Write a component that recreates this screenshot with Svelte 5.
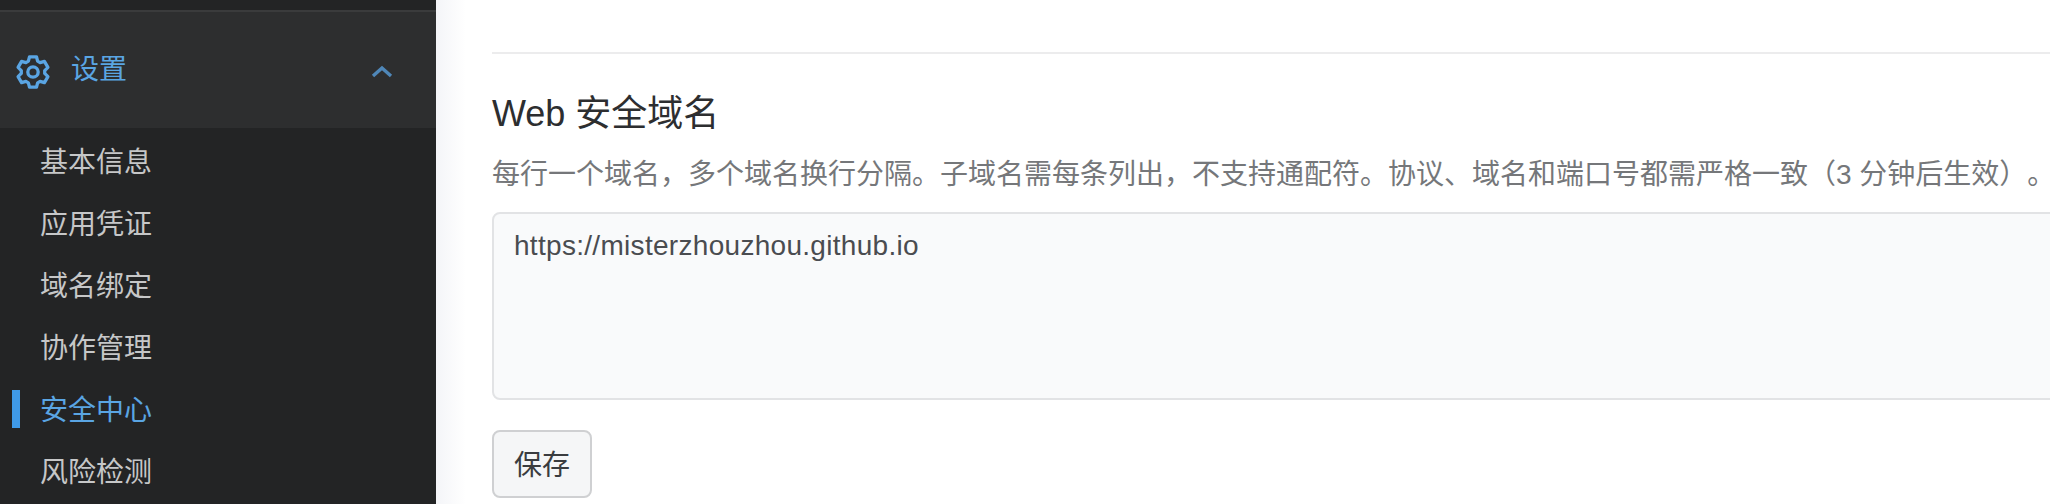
<script>
  const items = ['基本信息', '应用凭证', '域名绑定', '协作管理', '安全中心', '风险检测'];
  const active = '安全中心';

  function cogPath(outer, inner) {
    const pt = (deg, r) => {
      const a = (deg * Math.PI) / 180;
      return `${(20 + r * Math.cos(a)).toFixed(2)} ${(20 + r * Math.sin(a)).toFixed(2)}`;
    };
    const parts = [];
    for (let i = 0; i < 6; i++) {
      const a = -90 + i * 60;
      parts.push(pt(a - 13, outer), pt(a + 13, outer), pt(a + 23, inner), pt(a + 37, inner));
    }
    return 'M' + parts.join(' L') + ' Z';
  }
  const cog = cogPath(15.6, 11.8);
</script>

<div class="page">
  <aside class="side">
    <div class="top"></div>
    <div class="group">
      <svg class="gear" viewBox="0 0 40 40" fill="none" stroke="currentColor" stroke-width="3.3" stroke-linejoin="round">
        <circle cx="20" cy="20" r="5.2" />
        <path d={cog} />
      </svg>
      <span class="group-label">设置</span>
      <svg class="chev" viewBox="0 0 22 13" fill="none" stroke="currentColor" stroke-width="3.4" stroke-linejoin="miter">
        <path d="M2 11 L11 3 L20 11" />
      </svg>
    </div>
    <ul class="menu">
      {#each items as item}
        <li class:active={item === active}>{item}</li>
      {/each}
    </ul>
  </aside>
  <main class="main">
    <hr class="rule" />
    <h2 class="title">Web 安全域名</h2>
    <p class="desc">每行一个域名，多个域名换行分隔。子域名需每条列出，不支持通配符。协议、域名和端口号都需严格一致（3 分钟后生效）。</p>
    <div class="area">https://misterzhouzhou.github.io</div>
    <button class="save">保存</button>
  </main>
</div>

<style>
  :global(body) { margin: 0; background: #fff; }
  .page {
    display: flex;
    width: 2050px;
    height: 504px;
    overflow: hidden;
    font-family: "Liberation Sans", "Noto Sans CJK SC", sans-serif;
    text-spacing-trim: space-all;
  }
  .side {
    flex: 0 0 436px;
    background: #232425;
    display: flex;
    flex-direction: column;
  }
  .top { height: 10px; border-bottom: 2px solid #3a3b3c; }
  .group {
    height: 116px;
    flex: none;
    background: #2d2e2f;
    display: flex;
    align-items: center;
    color: #5aa5e3;
    padding-left: 13px;
    padding-right: 43px;
  }
  .gear { width: 40px; height: 40px; flex: none; margin-top: 4px; }
  .group-label { font-size: 28px; margin-left: 18px; flex: 1; line-height: 1; }
  .chev { width: 22px; height: 13px; color: #4f87b8; margin-top: 3px; }
  .menu { list-style: none; margin: 0; padding: 4px 0 0; }
  .menu li {
    position: relative;
    height: 62px;
    line-height: 62px;
    padding-left: 40px;
    font-size: 28px;
    color: #c6c7c8;
  }
  .menu li.active { color: #5aa5e3; }
  .menu li.active::before {
    content: "";
    position: absolute;
    left: 12px;
    top: 10px;
    width: 8px;
    height: 38px;
    background: #3f9ae8;
  }
  .main {
    flex: 1;
    min-width: 0;
    padding: 52px 0 0 56px;
    background: linear-gradient(to right, #f4f5f8 0, #fff 30px);
  }
  .rule { margin: 0; border: 0; height: 2px; background: #ececed; }
  .title {
    margin: 33px 0 0;
    font-size: 36px;
    line-height: 54px;
    font-weight: 400;
    color: #2d2e30;
  }
  .desc {
    margin: 12px 0 0;
    font-size: 28px;
    line-height: 44px;
    color: #75777a;
    white-space: nowrap;
  }
  .area {
    margin-top: 15px;
    width: 2000px;
    height: 188px;
    box-sizing: border-box;
    background: #f9fafb;
    border: 2px solid #e2e3e5;
    border-radius: 8px;
    padding: 14px 20px;
    font-size: 28px;
    letter-spacing: 0.3px;
    line-height: 36px;
    color: #4a4c50;
  }
  .save {
    display: block;
    margin-top: 30px;
    width: 100px;
    height: 68px;
    padding: 0 0 2px;
    box-sizing: border-box;
    background: #f5f6f7;
    border: 2px solid #cfd0d2;
    border-radius: 8px;
    font: inherit;
    font-size: 28px;
    color: #3a3c3f;
  }
</style>
